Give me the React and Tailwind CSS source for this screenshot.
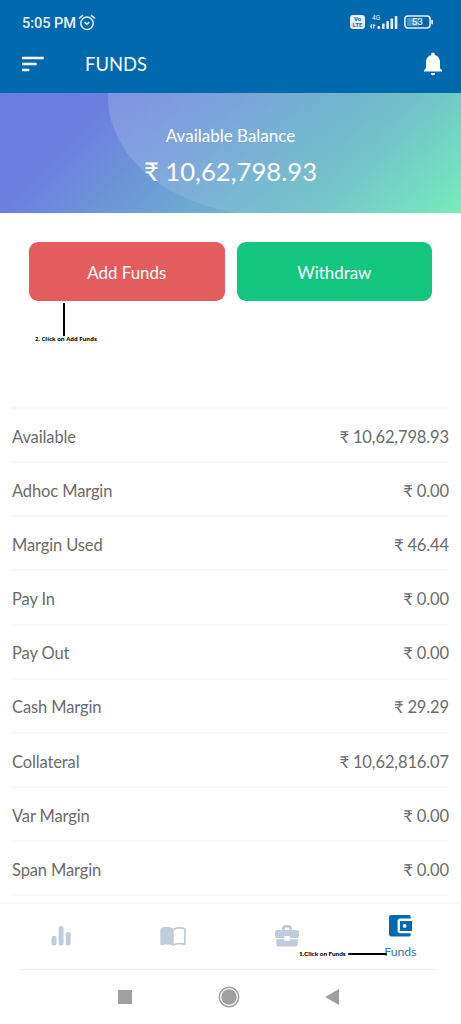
import React from "react";

const margins = [
  { label: "Available", value: "₹ 10,62,798.93" },
  { label: "Adhoc Margin", value: "₹ 0.00" },
  { label: "Margin Used", value: "₹ 46.44" },
  { label: "Pay In", value: "₹ 0.00" },
  { label: "Pay Out", value: "₹ 0.00" },
  { label: "Cash Margin", value: "₹ 29.29" },
  { label: "Collateral", value: "₹ 10,62,816.07" },
  { label: "Var Margin", value: "₹ 0.00" },
  { label: "Span Margin", value: "₹ 0.00" },
];

function StatusBar() {
  return (
    <div className="flex h-[44px] items-center justify-between pl-[22px] pr-[27px] text-[#e3f0f8]">
      <div className="flex items-center gap-[2px]">
        <span className="mt-[2px] font-[Roboto,sans-serif] text-[14.6px] font-medium leading-none tracking-[-0.05px]">
          5:05 PM
        </span>
        <svg width="18" height="17" viewBox="0 0 18 17" fill="none" stroke="currentColor" strokeWidth="1.5">
          <circle cx="9" cy="9.3" r="6.2" />
          <path d="M1 4.5 5 1.2M17 4.5 13 1.2" />
          <path d="m6.5 8.2 2.4 2 2.4-2" />
        </svg>
      </div>

      <div className="flex items-center">
        <div className="flex h-[14px] w-[15px] flex-col items-center justify-center rounded-[3px] bg-current">
          <span className="font-[Roboto,sans-serif] text-[6px] font-black leading-[6px] text-[#2678ad]">Vo</span>
          <span className="font-[Roboto,sans-serif] text-[6px] font-black leading-[6px] text-[#2678ad]">LTE</span>
        </div>
        <svg className="ml-1" width="29" height="16" viewBox="0 0 29 16" fill="currentColor">
          <text x="3" y="6" fontFamily="Roboto, sans-serif" fontSize="6.5">4G</text>
          <path d="M2.3 10v4.5M4.8 10v4.5M.8 12.5h1.5M4.8 11.5h1.5" stroke="currentColor" strokeWidth="1.2" />
          <rect x="8.5" y="12" width="2.6" height="3" rx=".7" />
          <rect x="13" y="9.6" width="2.6" height="5.4" rx=".7" />
          <rect x="17.3" y="7" width="2.6" height="8" rx=".7" />
          <rect x="21.5" y="4.5" width="2.6" height="10.5" rx=".7" />
          <rect x="25.8" y="2" width="2.6" height="13" rx=".7" />
        </svg>
        <svg className="ml-1.5" width="30" height="14" viewBox="0 0 30 14">
          <rect x=".9" y="1" width="25.2" height="12" rx="3.2" fill="none" stroke="currentColor" strokeWidth="1.6" />
          <rect x="3" y="3" width="12" height="8" rx="1" fill="#4a93c4" />
          <rect x="27.3" y="4.8" width="1.7" height="4.6" rx=".8" fill="currentColor" />
          <text x="13.3" y="10.4" textAnchor="middle" fontFamily="Roboto, sans-serif" fontSize="9.8" fontWeight="500" fill="currentColor">
            53
          </text>
        </svg>
      </div>
    </div>
  );
}

function AppBar() {
  return (
    <div className="flex h-[49px] items-center pl-[22px] pr-[19px] text-white">
      <svg className="mt-[-10px]" width="22" height="16" viewBox="0 0 22 16" fill="currentColor">
        <path d="M0 .8h21.7v2.4H0zM0 6.8h14.6v2.4H0zM0 12.8h7.3v2.4H0z" />
      </svg>
      <h1 className="ml-[41px] mt-[-8px] text-[18.4px] leading-none">FUNDS</h1>
      <svg className="ml-auto mt-[-9px]" width="18" height="24" viewBox="0 0 18 24" fill="currentColor">
        <path d="M9 .5c1.1 0 1.8.8 1.8 2v.4c3.3.8 5.2 3.8 5.2 7.3v6l2 2.1v1.2H0v-1.2l2-2.1v-6C2 6.7 3.9 3.7 7.2 2.9v-.4c0-1.2.7-2 1.8-2zM6.7 21h4.6a2.3 2.3 0 0 1-4.6 0z" />
      </svg>
    </div>
  );
}

function Balance() {
  return (
    <div className="relative flex h-[120px] flex-col items-center overflow-hidden bg-[linear-gradient(135deg,#6d7ce0_0%,#6c7fdf_20%,#6ea6d2_50%,#70c6c6_76%,#76e9bd_98%)] pt-[33px] text-white">
      {/* Lighter bubble behind the balance */}
      <div className="absolute left-[108px] top-[-114px] h-[236px] w-[420px] rounded-[160px/118px] bg-[linear-gradient(90deg,rgba(255,255,255,0.16),rgba(255,255,255,0.04)_50%,rgba(255,255,255,0)_84%)]" />
      <p className="relative text-[17px] leading-[20px]">Available Balance</p>
      <p className="relative mt-[9px] text-[25.7px] leading-[32px]">₹ 10,62,798.93</p>
    </div>
  );
}

function BottomNav() {
  return (
    <nav className="relative z-10 h-[67px] border-t-2 border-[#f8f8f8] bg-white">
      <div className="grid grid-cols-4 px-1 text-[#c0ccdc]">
        <div className="flex justify-center pt-[22px]">
          <svg width="20" height="20" viewBox="0 0 20 20" fill="currentColor">
            <rect x=".5" y="9.7" width="5" height="9.8" rx="2.5" />
            <rect x="7.6" y="0" width="5" height="19.5" rx="2.5" />
            <rect x="14.7" y="6" width="5" height="13.5" rx="2.5" />
          </svg>
        </div>
        <div className="flex justify-center pt-[22px]">
          <svg width="27" height="21" viewBox="0 0 27 21">
            <path d="M13.2 2.4C10 .8 5.5.5 2.4 1.4 1 1.8.3 2.5.3 4v13.2c0 1.5.8 2 2.2 1.7 3.7-.8 7.5-.6 10.7 1.1z" fill="currentColor" />
            <path d="M13.2 2.4c3.2-1.6 7.4-1.9 10.5-1 1.4.4 2.1 1.1 2.1 2.6v13.2c0 1.5-.8 2-2.2 1.7-3.7-.8-7.2-.6-10.4 1.1z" fill="currentColor" />
            <path d="M13.9 4.2c3-1.4 6.2-1.7 9.2-.9.7.2 1 .6 1 1.2v11.8c0 .5-.4.8-1 .7-3.2-.5-6.2-.3-9.2.9z" fill="white" />
          </svg>
        </div>
        <div className="flex justify-center pt-[21px]">
          <svg width="24" height="22" viewBox="0 0 24 22" fill="currentColor">
            <path d="M7 5V3.3C7 1.4 8.4 0 10.3 0h3.4C15.6 0 17 1.4 17 3.3V5h-2.7V3.4c0-.4-.3-.7-.7-.7h-3.2c-.4 0-.7.3-.7.7V5z" />
            <path d="M2.5 5h19C23 5 24 6 24 7.5v3.2c0 1.4-1 2.3-2.5 2.3h-6.7v-2H9.2v2H2.5C1 13 0 12.1 0 10.7V7.5C0 6 1 5 2.5 5z" />
            <path d="M1.2 14.2h8v1.6h5.6v-1.6h8v4.7c0 1.6-1 2.6-2.6 2.6H3.8c-1.6 0-2.6-1-2.6-2.6z" />
          </svg>
        </div>
        <div className="flex flex-col items-center pt-[11px] text-[#0068ae]">
          <svg className="ml-[2px]" width="24" height="22" viewBox="0 0 24 22">
            <path d="M2.5 0h17c1.4 0 2.2.8 2.2 2.1v1.5H11c-1.5 0-2.4.9-2.4 2.4v9.8c0 1.5.9 2.4 2.4 2.4h10.7v1.2c0 1.4-.8 2.2-2.2 2.2h-17C.9 21.6 0 20.7 0 19.1V2.5C0 .9.9 0 2.5 0z" fill="currentColor" />
            <path d="M11 6h12v10H11z" fill="currentColor" />
            <circle cx="15.6" cy="10.9" r="1.9" fill="white" />
          </svg>
          <span className="mt-[7px] text-[12.3px] leading-[16px] text-[#2d7eb5]">Funds</span>
        </div>
      </div>

      {/* Step 1 callout */}
      <div className="absolute left-[299px] top-[46px] flex items-center">
        <span className="w-[47px] whitespace-nowrap font-[Lato,sans-serif] text-[6.4px] font-black leading-[8px] text-black">
          1.Click on Funds
        </span>
        <span className="ml-[2px] h-[2px] w-[39px] rounded-full bg-black" />
      </div>
    </nav>
  );
}

export default function App() {
  return (
    <div className="flex h-[1024px] w-[461px] flex-col overflow-hidden bg-white font-[Lato,sans-serif]">
      {/* Header */}
      <header className="h-[93px] shrink-0 bg-[#0068ad]">
        <StatusBar />
        <AppBar />
      </header>

      <Balance />

      {/* Actions */}
      <div className="relative h-[194px] shrink-0 px-[29px] pt-[29px]">
        <div className="grid grid-cols-2 gap-3 text-[16.9px] text-white">
          <button className="h-[59px] rounded-[9px] bg-[#e45d5e] pt-[2px]">Add Funds</button>
          <button className="h-[59px] rounded-[9px] bg-[#14c57f] pt-[2px]">Withdraw</button>
        </div>

        {/* Step 2 callout */}
        <div className="absolute left-[35px] top-[90px]">
          <div className="ml-[28px] h-[33px] w-[2px] bg-black" />
          <p className="whitespace-nowrap font-['Open_Sans',sans-serif] text-[5.9px] font-bold leading-[6px] text-black">
            2. Click on Add Funds
          </p>
        </div>
      </div>

      {/* Margin list */}
      <div className="mx-3 h-[495px] shrink-0 overflow-hidden text-[16.5px] tracking-[-0.12px] text-[#6b6b6b]">
        {margins.map((item) => (
          <div key={item.label} className="flex h-[54.15px] items-center justify-between border-t-2 border-[#f8f8f9] pt-[4px]">
            <span>{item.label}</span>
            <span>{item.value}</span>
          </div>
        ))}
        <div className="border-t-2 border-[#f8f8f9]" />
      </div>

      <BottomNav />

      {/* System navigation */}
      <div className="ml-5 mr-6 flex h-[55px] items-center border-t border-[#f2f2f2] pl-[98px] text-[#a0a0a0]">
        <div className="size-[14px] bg-current" />
        <svg className="ml-[86px]" width="22" height="22" viewBox="0 0 22 22">
          <circle cx="11" cy="11" r="9.7" fill="none" stroke="currentColor" strokeWidth="1.5" />
          <circle cx="11" cy="11" r="7.7" fill="currentColor" />
        </svg>
        <svg className="ml-[85px]" width="14" height="16" viewBox="0 0 14 16" fill="currentColor">
          <path d="M0 8 14 0v16z" />
        </svg>
      </div>
    </div>
  );
}
